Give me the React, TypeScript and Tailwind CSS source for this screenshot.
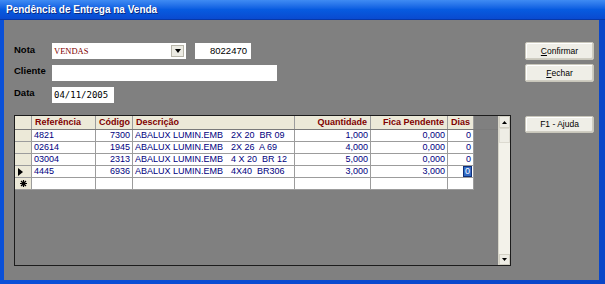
import React from "react";

const cols = [17, 64, 37, 162, 76, 77, 26];

const rows = [
    { ref: "4821", cod: "7300", desc: "2X 20  BR 09", qtd: "1,000", fica: "0,000", dias: "0" },
    { ref: "02614", cod: "1945", desc: "2X 26  A 69", qtd: "4,000", fica: "0,000", dias: "0" },
    { ref: "03004", cod: "2313", desc: "4 X 20  BR 12", qtd: "5,000", fica: "0,000", dias: "0" },
    { ref: "4445", cod: "6936", desc: "4X40  BR306", qtd: "3,000", fica: "3,000", dias: "0", current: true },
];

const cell = "h-full border-r border-[#9c9c9c] shrink-0 overflow-hidden whitespace-pre";

const Btn: React.FC<{ label: React.ReactNode; h?: string; mt?: string }> = ({ label, h = "h-[18px]", mt = "" }) => (
    <div className={`${h} ${mt} w-[69px] rounded-[2px] border border-[#c9c7bb] bg-[#efeee7] shadow-[inset_-1px_-1px_0_#cfcdc2,inset_1px_1px_0_#ffffff] flex items-center justify-center text-[8.5px] text-black`}>
        {label}
    </div>
);

const App: React.FC = () => {
    return (
        <div className="w-[605px] h-[284px] flex flex-col bg-[#0a4cd0] font-['Liberation_Sans',Arial,sans-serif]">
            {/* title bar */}
            <div className="h-[20px] shrink-0 bg-gradient-to-b from-[#3f8bf3] via-[#075be0] to-[#0a4ad0] flex items-center pl-[6px] border-b border-[#0838a8]">
                <span className="text-white font-bold text-[10px] leading-none [text-shadow:1px_1px_0_#0a2a80]">Pendência de Entrega na Venda</span>
            </div>

            <div className="flex-1 flex pl-[4px] pr-[6px] pb-[4px] bg-gradient-to-r from-[#0a50d8] to-[#0a46c8]">
                <div className="flex-1 bg-[#808080] flex pl-[10px]">
                    {/* left column */}
                    <div className="w-[497px] flex flex-col pt-[23px]">
                        <div className="flex items-start h-[16px]">
                            <span className="w-[38px] pt-[2px] text-[9.5px] font-bold text-black leading-none">Nota</span>
                            <div className="w-[134px] h-[16px] bg-white flex items-center pl-[2px] relative">
                                <span className="font-['Liberation_Serif',serif] text-[8.5px] text-[#800000] leading-none">VENDAS</span>
                                <div className="absolute right-[2px] top-[2px] w-[13px] h-[12px] bg-[#ecebe3] border border-[#b8b6aa] flex items-center justify-center">
                                    <svg width="6" height="4" viewBox="0 0 6 4"><path d="M0 0h6L3 4z" fill="#000" /></svg>
                                </div>
                            </div>
                            <div className="ml-[9px] w-[56px] h-[16px] bg-white flex items-center justify-end pr-[4px] text-[9.5px] text-black leading-none">8022470</div>
                        </div>
                        <div className="flex items-start h-[16px] mt-[6px]">
                            <span className="w-[38px] pt-[1px] text-[9.5px] font-bold text-black leading-none">Cliente</span>
                            <div className="w-[225px] h-[16px] bg-white" />
                        </div>
                        <div className="flex items-start h-[16px] mt-[6px]">
                            <span className="w-[38px] pt-[1px] text-[9.5px] font-bold text-black leading-none">Data</span>
                            <div className="w-[62px] h-[16px] bg-white flex items-center pl-[2px] font-['DejaVu_Sans_Mono',monospace] text-[9px] text-black leading-none">04/11/2005</div>
                        </div>

                        {/* grid */}
                        <div className="mt-[12px] h-[151px] border border-[#1c1c1c] flex">
                            <div className="flex-1 flex flex-col">
                                <div className="h-[14px] flex border-b border-[#7a7a7a] text-[9px] font-bold text-[#800000] leading-[13px]">
                                    <div className={`${cell} bg-[#ece9d8]`} style={{ width: cols[0] }} />
                                    <div className={`${cell} bg-[#ece9d8] pl-[3px]`} style={{ width: cols[1] }}>Referência</div>
                                    <div className={`${cell} bg-[#ece9d8] pl-[3px]`} style={{ width: cols[2] }}>Código</div>
                                    <div className={`${cell} bg-[#ece9d8] pl-[3px]`} style={{ width: cols[3] }}>Descrição</div>
                                    <div className={`${cell} bg-[#ece9d8] pr-[3px] text-right`} style={{ width: cols[4] }}>Quantidade</div>
                                    <div className={`${cell} bg-[#ece9d8] pr-[3px] text-right`} style={{ width: cols[5] }}>Fica Pendente</div>
                                    <div className={`${cell} bg-[#ece9d8] pr-[3px] text-right`} style={{ width: cols[6] }}>Dias</div>
                                </div>
                                {rows.map((r, i) => (
                                    <div key={i} className="h-[12px] flex text-[9px] text-[#000080] leading-[11px]">
                                        <div className={`${cell} bg-[#ece9d8] border-b flex items-center pl-[3px]`} style={{ width: cols[0] }}>
                                            {r.current && <svg width="5" height="8" viewBox="0 0 5 8"><path d="M0 0l5 4-5 4z" fill="#000" /></svg>}
                                        </div>
                                        <div className={`${cell} bg-white border-b pl-[2px]`} style={{ width: cols[1] }}>{r.ref}</div>
                                        <div className={`${cell} bg-white border-b pr-[2px] text-right`} style={{ width: cols[2] }}>{r.cod}</div>
                                        <div className={`${cell} bg-white border-b pl-[2px] flex`} style={{ width: cols[3] }}>
                                            <span className="w-[96px] shrink-0">ABALUX LUMIN.EMB</span>
                                            <span>{r.desc}</span>
                                        </div>
                                        <div className={`${cell} bg-white border-b pr-[2px] text-right`} style={{ width: cols[4] }}>{r.qtd}</div>
                                        <div className={`${cell} bg-white border-b pr-[2px] text-right`} style={{ width: cols[5] }}>{r.fica}</div>
                                        <div className={`${cell} bg-white border-b pr-[2px] flex justify-end items-center`} style={{ width: cols[6] }}>
                                            {r.current
                                                ? <span className="bg-[#316ac5] text-white px-[1px] h-[9px] leading-[9px] outline outline-1 outline-[#10307a]">{r.dias}</span>
                                                : r.dias}
                                        </div>
                                    </div>
                                ))}
                                <div className="h-[12px] flex">
                                    <div className={`${cell} bg-[#ece9d8] border-b flex items-center justify-center`} style={{ width: cols[0] }}>
                                        <svg width="7" height="7" viewBox="0 0 7 7" stroke="#000" strokeWidth="1.2"><path d="M3.5 0v7M0 3.5h7M1 1l5 5M6 1l-5 5" /></svg>
                                    </div>
                                    {cols.slice(1).map((w, i) => (
                                        <div key={i} className={`${cell} bg-white border-b`} style={{ width: w }} />
                                    ))}
                                </div>
                            </div>

                            {/* scrollbar */}
                            <div className="w-[12px] bg-[#f3f2ea] flex flex-col border-l border-[#d8d6ca]">
                                <div className="h-[12px] bg-[#eeede5] border border-[#d2d0c4] flex items-center justify-center">
                                    <svg width="5" height="3" viewBox="0 0 5 3"><path d="M0 3h5L2.5 0z" fill="#000" /></svg>
                                </div>
                                <div className="h-[15px] bg-[#eeede5] border border-[#dcdad0]" />
                                <div className="flex-1" />
                                <div className="h-[11px] bg-[#eeede5] border border-[#d2d0c4] flex items-center justify-center">
                                    <svg width="5" height="3" viewBox="0 0 5 3"><path d="M0 0h5L2.5 3z" fill="#000" /></svg>
                                </div>
                            </div>
                        </div>
                    </div>

                    {/* right column */}
                    <div className="ml-[14px] flex flex-col pt-[22px]">
                        <Btn label={<span><span className="underline">C</span>onfirmar</span>} />
                        <Btn label={<span><span className="underline">F</span>echar</span>} mt="mt-[4px]" />
                        <Btn label="F1 - Ajuda" h="h-[17px]" mt="mt-[34px]" />
                    </div>
                </div>
            </div>
        </div>
    );
};

export default App;
